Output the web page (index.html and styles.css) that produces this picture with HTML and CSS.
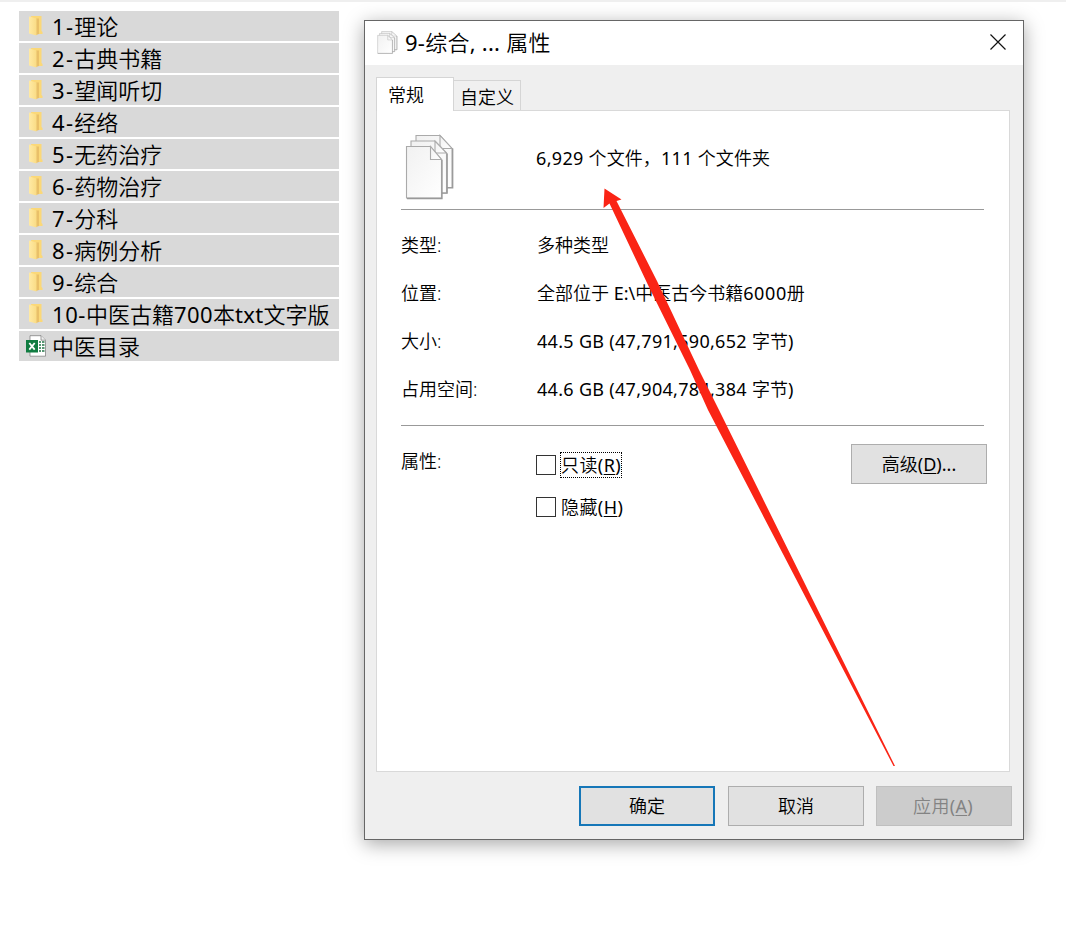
FILE: index.html
```html
<!DOCTYPE html>
<html lang="zh-CN">
<head>
<meta charset="utf-8">
<title>属性</title>
<link rel="stylesheet" href="styles.css">
</head>
<body>
<svg class="defs" width="0" height="0">
  <defs>
    <linearGradient id="gold" x1="0" x2="1"><stop offset="0" stop-color="#ffeaa5"/><stop offset="1" stop-color="#fadc85"/></linearGradient>
    <linearGradient id="paper" x1="0" y1="0" x2="1" y2="1"><stop offset="0" stop-color="#f1f1f1"/><stop offset="1" stop-color="#fff"/></linearGradient>
    <symbol id="folder" viewBox="0 0 20 22"><path d="M5 1h10.500v15l1 1v2H8z" fill="#fbd878"/><path d="M10 3.500h3V19l-3 1z" fill="#e9c069"/><path d="M3 1.500l7.500 2V20.500L3 18.500z" fill="url(#gold)"/></symbol>
    <symbol id="pages" viewBox="0 0 50 66">
      <g fill="url(#paper)" stroke="#aaa" stroke-width="1.100">
        <path d="M11 1.500h24l12 13v39H11z"/><path d="M35 1.500v13h12z"/>
        <path d="M6 7h24l11.500 12v40H6z"/><path d="M30 7v12h11.500z"/>
        <path d="M1.500 12.500h24L36.500 25.500v38.500h-35z"/><path d="M25.500 12.500v13h11z"/>
      </g>
      <path d="M2 64.500h35V26M37 59.200h5.200V19.500M42 53.800h5.700V14.500" fill="none" stroke="#999" stroke-width="1.300"/>
    </symbol>
  </defs>
</svg>
<main class="desktop">
  <ul class="files">
    <li class="file"><svg class="file-icon"><use href="#folder"/></svg><span><span class="latin">1-</span>理论</span></li>
    <li class="file"><svg class="file-icon"><use href="#folder"/></svg><span><span class="latin">2-</span>古典书籍</span></li>
    <li class="file"><svg class="file-icon"><use href="#folder"/></svg><span><span class="latin">3-</span>望闻听切</span></li>
    <li class="file"><svg class="file-icon"><use href="#folder"/></svg><span><span class="latin">4-</span>经络</span></li>
    <li class="file"><svg class="file-icon"><use href="#folder"/></svg><span><span class="latin">5-</span>无药治疗</span></li>
    <li class="file"><svg class="file-icon"><use href="#folder"/></svg><span><span class="latin">6-</span>药物治疗</span></li>
    <li class="file"><svg class="file-icon"><use href="#folder"/></svg><span><span class="latin">7-</span>分科</span></li>
    <li class="file"><svg class="file-icon"><use href="#folder"/></svg><span><span class="latin">8-</span>病例分析</span></li>
    <li class="file"><svg class="file-icon"><use href="#folder"/></svg><span><span class="latin">9-</span>综合</span></li>
    <li class="file"><svg class="file-icon"><use href="#folder"/></svg><span><span class="latin-long">10-</span>中医古籍<span class="latin-mid">700</span>本<span class="latin-mid">txt</span>文字版</span></li>
    <li class="file"><svg class="file-icon" viewBox="0 0 20 22"><path d="M4 .7h11l4.500 4.500v16H4z" fill="#fff" stroke="#777" stroke-width=".7"/><path d="M15 .7v4.500h4.500" fill="#eee" stroke="#777" stroke-width=".7"/><path d="M13 7h2M16 7h2.500M13 10h2M16 10h2.500M13 13h2M16 13h2.500M13 16h2M16 16h2.500" stroke="#217346" stroke-width="1.500"/><path d="M0 5h12v12.500H0z" fill="#107c41"/><path d="M3.300 8l5.400 6.600M8.700 8l-5.400 6.600" stroke="#fff" stroke-width="1.800"/></svg><span>中医目录</span></li>
  </ul>
  <section class="dialog">
    <header class="titlebar">
      <svg class="title-icon" viewBox="0 0 50 66" preserveAspectRatio="none"><use href="#pages" width="50" height="66"/></svg>
      <h1 class="title"><span class="regular">9-</span>综合<span class="regular">, ... </span>属性</h1>
      <svg class="close" viewBox="0 0 18 18"><path d="M1.500 1.500l15 15M16.500 1.500l-15 15" stroke="#111" stroke-width="1.200"/></svg>
    </header>
    <nav class="tabs"><div class="tab active">常规</div><div class="tab">自定义</div></nav>
    <div class="panel">
      <div class="summary">
        <svg class="pages"><use href="#pages"/></svg>
        <p class="count"><span class="num">6,929</span> 个文件，<span class="num">111</span> 个文件夹</p>
      </div>
      <dl class="details">
        <dt>类型:</dt><dd>多种类型</dd>
        <dt>位置:</dt><dd>全部位于 <span class="regular">E:\</span>中医古今书籍<span class="wide">6000</span>册</dd>
        <dt>大小:</dt><dd><span class="size">44.5 GB (47,791,590,652 </span>字节<span class="regular">)</span></dd>
        <dt>占用空间:</dt><dd><span class="size">44.6 GB (47,904,784,384 </span>字节<span class="regular">)</span></dd>
      </dl>
      <div class="attributes">
        <span class="attr-label">属性:</span>
        <div class="checks">
          <label class="check"><i class="box"></i><span class="check-text focused">只读<span class="regular">(<u>R</u>)</span></span></label>
          <label class="check"><i class="box"></i><span class="check-text">隐藏<span class="regular">(<u>H</u>)</span></span></label>
        </div>
        <button class="button advanced">高级<span class="regular">(<u>D</u>)...</span></button>
      </div>
    </div>
    <footer class="actions">
      <button class="button primary">确定</button>
      <button class="button">取消</button>
      <button class="button disabled">应用<span class="regular">(<u>A</u>)</span></button>
    </footer>
  </section>
</main>
<svg class="arrow" viewBox="0 0 1066 944"><path d="M604.500 188.500L621.500 199.500L616.500 201L657 281L699 370L719 410L895 766L893.500 766L708 410L690 370L648 285L609.500 203.500L603.500 208z" fill="#fa2415"/></svg>
</body>
</html>
```
FILE: styles.css
```css
* { box-sizing: border-box; }
body { margin: 0; width: 1066px; height: 944px; overflow: hidden; background: #fff; border-top: 2px solid #efefef; color: #000; font: 350 18px/24px "Noto Sans", "Noto Sans CJK SC", sans-serif; }
.defs { position: absolute; }
.desktop { display: flex; align-items: flex-start; padding-left: 19px; }
.files { list-style: none; margin: 9px 25px 0 0; padding: 0; width: 320px; display: flex; flex-direction: column; gap: 2px; }
.file { display: flex; align-items: center; height: 30px; padding-left: 7px; background: #d9d9d9; font-size: 22px; line-height: 30px; white-space: nowrap; }
.file-icon { width: 20px; height: 22px; margin-right: 6px; flex: none; }
.file > span { height: 30px; }
.regular, .latin, .latin-long, .latin-mid, .num, .wide, .size { font-weight: 400; }
.latin { letter-spacing: 1.3px; }
.latin-long { letter-spacing: .6px; }
.latin-mid { letter-spacing: .35px; }
.dialog { width: 660px; height: 820px; margin-top: 18px; border: 1px solid #666; background: #efefef; box-shadow: 0 4px 18px rgba(0,0,0,.35); }
.titlebar { display: flex; align-items: center; height: 44px; padding: 0 15px 0 12px; background: #fff; }
.title-icon { width: 21px; height: 23px; margin: -2px 7px 0 0; }
.title { margin: -2px 0 0; flex: 1; font-size: 22px; font-weight: inherit; line-height: 30px; letter-spacing: .25px; }
.close { width: 18px; height: 18px; margin: -2px 1px 0 0; }
.tabs { display: flex; align-items: flex-end; height: 45px; padding-left: 11px; }
.tab { height: 30px; width: 67px; border: 1px solid #d5d5d5; border-left: 0; border-bottom: 0; background: #f0f0f0; text-align: center; line-height: 33px; }
.tab.active { width: 78px; height: 34px; margin-bottom: -1px; border-left: 1px solid #d5d5d5; background: #fff; text-align: left; padding-left: 11px; line-height: 34px; z-index: 1; }
.panel { width: 634px; height: 662px; margin-left: 11px; padding: 24px 25px 0 24px; border: 1px solid #d9d9d9; background: #fff; }
.summary { display: flex; height: 75px; border-bottom: 1px solid #999; }
.pages { width: 50px; height: 66px; margin: -1px 81px 0 4px; flex: none; }
.count { margin: 11px 0 0; letter-spacing: .1px; }
.num { letter-spacing: .35px; }
.wide { letter-spacing: .6px; }
.size { letter-spacing: .3px; }
.details { display: grid; grid-template-columns: 136px 1fr; grid-auto-rows: 48px; align-items: center; margin: 0; height: 216px; padding-top: 11px; border-bottom: 1px solid #999; white-space: nowrap; }
.details dd { margin: 0; }
.attributes { display: flex; margin-right: -3px; padding-top: 18px; }
.attr-label { width: 135px; padding-top: 5px; }
.checks { display: flex; flex-direction: column; gap: 16px; padding-top: 8px; flex: 1; }
.check { display: flex; align-items: center; height: 26px; gap: 4px; }
.box { width: 20px; height: 20px; border: 1px solid #333; }
.check-text { border: 1px solid transparent; height: 26px; line-height: 25px; letter-spacing: .4px; }
.focused { border: 1px dotted #000; }
.button { width: 136px; height: 40px; padding: 0; border: 1px solid #adadad; background: #e1e1e1; color: #000; font: inherit; }
.actions { display: flex; justify-content: flex-end; gap: 12px; padding: 14px 11px 0; }
.primary { margin-right: 1px; border: 2px solid #1677b8; }
.disabled { padding-right: 2px; background: #ccc; border-color: #bfbfbf; color: #838383; letter-spacing: .3px; }
u { text-underline-offset: 2px; text-decoration-thickness: 1px; }
.arrow { position: absolute; left: 0; top: 0; width: 1066px; height: 944px; pointer-events: none; }
```
